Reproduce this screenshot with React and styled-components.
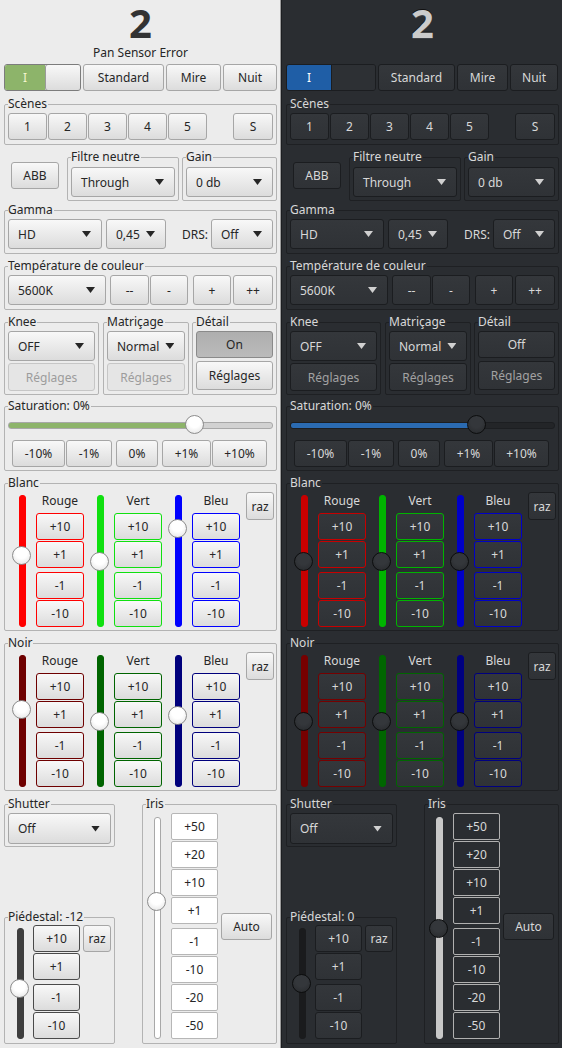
import React from 'react'
import styled, { createGlobalStyle, ThemeProvider } from 'styled-components'

const GlobalStyle = createGlobalStyle`
  html, body { margin: 0; padding: 0; background: #2a2d31; }
  body { font-family: "Noto Sans", "Open Sans", sans-serif; font-size: 12px; }
  * { box-sizing: border-box; }
`

const themes = {
  light: {
    bg: '#ececec',
    text: '#262626',
    title: '#333333',
    titleShadow: 'none',
    groupBorder: '#b3b3b3',
    btnBg: 'linear-gradient(#f8f8f8, #dcdcdc)',
    btnBorder: '#a6a6a6',
    disBg: '#e5e5e5',
    disBorder: '#c6c6c6',
    disText: '#9c9c9c',
    onBg: 'linear-gradient(#aeaeae, #bbbbbb)',
    onBorder: '#8a8a8a',
    accent: '#8db46a',
    accentText: '#f4f4cc',
    switchBorder: '#7c7c7c',
    switchOff: 'linear-gradient(#f8f8f8, #dcdcdc)',
    switchOffBorder: '#9a9a9a',
    switchOffRadius: '3px',
    arrow: '#262626',
    groove: '#d2d2d2',
    grooveBorder: '#a8a8a8',
    fill: '#8db46a',
    knob: 'radial-gradient(circle at 50% 35%, #ffffff 40%, #e0e0e0)',
    knobBorder: '#8c8c8c',
    irisBg: '#ffffff',
    irisBorder: '#b6b6b6',
    irisGroove: '#ffffff',
    irisGrooveBorder: '#a8a8a8',
    pedGroove: '#3e3e3e',
    pedBtn: '#4a4a4a',
    blanc: ['#ff0000', '#10e010', '#0000ff'],
    noir: ['#6e0000', '#006400', '#00007c'],
  },
  dark: {
    bg: '#2a2d31',
    text: '#d8d8d8',
    title: '#cbcbcb',
    titleShadow: '0 -1px 0 #111, 0 1px 0 #3c3f44',
    groupBorder: '#1e2023',
    btnBg: 'linear-gradient(#34373b, #2f3236)',
    btnBorder: '#1b1d20',
    disBg: 'linear-gradient(#34373b, #2f3236)',
    disBorder: '#1b1d20',
    disText: '#a2a2a2',
    onBg: '#3c4046',
    onBorder: '#1b1d20',
    accent: '#1f5ea6',
    accentText: '#ffffff',
    switchBorder: '#1b1d20',
    switchOff: '#2d3034',
    switchOffBorder: '#1b1d20',
    switchOffRadius: '0',
    arrow: '#d0d0d0',
    groove: '#232528',
    grooveBorder: '#1c1e21',
    fill: '#2b6bb2',
    knob: 'radial-gradient(circle at 50% 35%, #34373b 40%, #26282b)',
    knobBorder: '#0c0d0e',
    irisBg: '#2a2d31',
    irisBorder: '#b0b0b0',
    irisGroove: '#c8c8c8',
    irisGrooveBorder: '#c8c8c8',
    pedGroove: '#1a1b1d',
    pedBtn: '#1b1d20',
    blanc: ['#c80000', '#00b400', '#0000c8'],
    noir: ['#760000', '#006600', '#000080'],
  },
}

const panels = [
  {
    theme: themes.light,
    error: 'Pan Sensor Error',
    switchW: 77,
    switchOn: 40,
    modes: [81, 55, 54],
    detail: true,
    sat: 0.72,
    blanc: [0.45, 0.5, 0.21],
    noir: [0.4, 0.5, 0.45],
    iris: 0.37,
    ped: 0.55,
    pedValue: -12,
  },
  {
    theme: themes.dark,
    error: '',
    switchW: 90,
    switchOn: 44,
    modes: [77, 51, 48],
    detail: false,
    sat: 0.72,
    blanc: [0.5, 0.5, 0.5],
    noir: [0.5, 0.5, 0.5],
    iris: 0.5,
    ped: 0.5,
    pedValue: 0,
  },
]

const Page = styled.div`
  display: flex;
  width: 562px;
  height: 1048px;
  overflow: hidden;
`

const Panel = styled.div`
  width: 280px;
  height: 1048px;
  flex: none;
  padding: 0 3px 0 4px;
  display: flex;
  flex-direction: column;
  background: ${p => p.theme.bg};
  color: ${p => p.theme.text};
`

const Separator = styled.div`
  width: 2px;
  flex: none;
  background: linear-gradient(to right, #9c9c9c 50%, #1c1e21 50%);
`

const Title = styled.div`
  height: 46px;
  font-size: 40px;
  line-height: 46px;
  font-weight: 700;
  text-align: center;
  color: ${p => p.theme.title};
  text-shadow: ${p => p.theme.titleShadow};
`

const Subtitle = styled.div`
  height: 13px;
  line-height: 13px;
  text-align: center;
`

const Row = styled.div`
  display: flex;
  align-items: ${p => p.$align || 'stretch'};
  margin-top: ${p => p.$mt || 0}px;
  gap: ${p => p.$gap || 0}px;
`

const Btn = styled.button`
  flex: none;
  width: ${p => (p.$w ? `${p.$w}px` : '100%')};
  height: ${p => p.$h || 27}px;
  margin: ${p => (p.$gapTop ? 3 : 0)}px 0 0 ${p => (typeof p.$ml === 'number' ? `${p.$ml}px` : p.$ml || '0')};
  align-self: ${p => p.$self || 'auto'};
  padding: 0;
  font: inherit;
  font-size: 12px;
  color: ${p => (p.disabled ? p.theme.disText : p.theme.text)};
  background: ${p => (p.$on ? p.theme.onBg : p.disabled ? p.theme.disBg : p.theme.btnBg)};
  border: 1px solid ${p => p.$c || (p.$on ? p.theme.onBorder : p.disabled ? p.theme.disBorder : p.theme.btnBorder)};
  border-radius: 3px;
`

const IrisBtn = styled(Btn)`
  background: ${p => p.theme.irisBg};
  border-color: ${p => p.theme.irisBorder};
  border-radius: 2px;
`

const Combo = styled.div`
  flex: none;
  width: ${p => (p.$w ? `${p.$w}px` : '100%')};
  height: ${p => p.$h || 30}px;
  margin-left: ${p => p.$ml || 0}px;
  padding: 0 10px 0 9px;
  display: flex;
  align-items: center;
  justify-content: space-between;
  gap: 6px;
  background: ${p => p.theme.btnBg};
  border: 1px solid ${p => p.theme.btnBorder};
  border-radius: 3px;
`

const Arrow = styled.span`
  flex: none;
  width: 9px;
  height: 6px;
  background: ${p => p.theme.arrow};
  clip-path: polygon(0 0, 100% 0, 50% 100%);
`

const Switch = styled.div`
  flex: none;
  display: flex;
  width: ${p => p.$w}px;
  height: 27px;
  border: 1px solid ${p => p.theme.switchBorder};
  border-radius: 3px;
  overflow: hidden;
  background: ${p => p.theme.switchOff};
`

const SwitchOn = styled.span`
  width: ${p => p.$w}px;
  flex: none;
  display: flex;
  align-items: center;
  justify-content: center;
  background: ${p => p.theme.accent};
  color: ${p => p.theme.accentText};
`

const SwitchOff = styled.span`
  flex: 1;
  background: ${p => p.theme.switchOff};
  border: 1px solid ${p => p.theme.switchOffBorder};
  border-radius: ${p => p.theme.switchOffRadius};
  margin: -1px -1px -1px 0;
`

const Group = styled.fieldset`
  margin: 0 0 0 ${p => p.$ml || 0}px;
  min-width: 0;
  padding: ${p => (p.$pt === undefined ? 2 : p.$pt)}px 3px ${p => (p.$pb === undefined ? 4 : p.$pb)}px 3px;
  border: 1px solid ${p => p.theme.groupBorder};
  border-radius: 2px;
  width: ${p => (p.$w ? `${p.$w}px` : 'auto')};
  flex: ${p => (p.$w ? 'none' : '1')};
`

const Legend = styled.legend`
  padding: 0 1px 0 0;
  font-size: 12px;
  line-height: 14px;
  color: ${p => p.theme.text};
`

const GroupRow = styled.div`
  display: flex;
  align-items: ${p => p.$align || 'center'};
  gap: ${p => p.$gap || 0}px;
  margin-top: ${p => p.$mt || 0}px;
  padding-left: ${p => p.$pl || 0}px;
`

const GroupCol = styled.div`
  display: flex;
  flex-direction: column;
  gap: ${p => p.$gap || 0}px;
`

const FieldLabel = styled.span`
  margin-left: auto;
  margin-right: 3px;
`

const HTrack = styled.div`
  position: relative;
  height: 19px;
  &::before {
    content: '';
    position: absolute;
    left: 0;
    right: 0;
    top: 7px;
    height: 5px;
    border-radius: 3px;
    border: 1px solid ${p => p.theme.grooveBorder};
    background: linear-gradient(to right, ${p => p.theme.fill} ${p => p.$v * 100}%, ${p => p.theme.groove} ${p => p.$v * 100}%);
  }
`

const VTrack = styled.div`
  position: relative;
  flex: none;
  width: 19px;
  margin: ${p => p.$mt || 0}px 0 0 ${p => p.$ml || 0}px;
  &::before {
    content: '';
    position: absolute;
    top: 0;
    bottom: 0;
    left: 7px;
    width: 5px;
    border-radius: 3px;
    background: ${p => p.$c};
    border: 1px solid ${p => p.$border || p.$c};
  }
`

const Knob = styled.div`
  position: absolute;
  width: 19px;
  height: 19px;
  border-radius: 50%;
  background: ${p => p.theme.knob};
  border: 1px solid ${p => p.theme.knobBorder};
`

const Stack = styled.div`
  display: flex;
  flex-direction: column;
  gap: 1px;
  flex: none;
  width: ${p => p.$w}px;
  margin-left: ${p => p.$ml || 0}px;
`

const ChannelName = styled.div`
  margin: 2px 0 4px;
  height: 14px;
  line-height: 14px;
  text-align: center;
`

const Channel = styled.div`
  display: flex;
  flex: none;
`

const BottomRow = styled.div`
  display: flex;
  margin-top: 6px;
`

const LeftCol = styled.div`
  width: 111px;
  flex: none;
  display: flex;
  flex-direction: column;
  justify-content: space-between;
`

function VSlider({ knob, ...rest }) {
  return (
    <VTrack {...rest}>
      <Knob style={{ top: `calc((100% - 19px) * ${knob})` }} />
    </VTrack>
  )
}

function HSlider({ value }) {
  return (
    <HTrack $v={value}>
      <Knob style={{ left: `calc((100% - 19px) * ${value})`, top: 0 }} />
    </HTrack>
  )
}

const channels = ['Rouge', 'Vert', 'Bleu']
const steps = ['+10', '+1', '-1', '-10']
const irisSteps = ['+50', '+20', '+10', '+1', '-1', '-10', '-20', '-50']
const satSteps = [
  { label: '-10%', w: 53, ml: 4 },
  { label: '-1%', w: 46, ml: 1 },
  { label: '0%', w: 42, ml: 4 },
  { label: '+1%', w: 49, ml: 4 },
  { label: '+10%', w: 55, ml: 1 },
]

function ColorGroup({ title, colors, knobs, mt }) {
  return (
    <Row $mt={mt}>
      <Group $pb={3}>
        <Legend>{title}</Legend>
        <GroupRow $align="stretch" $gap={6} $pl={4}>
          {channels.map((name, i) => (
            <Channel key={name}>
              <VSlider $c={colors[i]} $mt={3} knob={knobs[i]} />
              <Stack $w={48} $ml={5}>
                <ChannelName>{name}</ChannelName>
                {steps.map((s, j) => (
                  <Btn key={s} $c={colors[i]} $gapTop={j === 2}>{s}</Btn>
                ))}
              </Stack>
            </Channel>
          ))}
          <Btn $w={28} $h={28} $self="flex-start" $ml="auto">raz</Btn>
        </GroupRow>
      </Group>
    </Row>
  )
}

function CameraPanel({ cfg }) {
  const t = cfg.theme
  return (
    <Panel>
      <Title>2</Title>
      <Subtitle>{cfg.error || '\u00a0'}</Subtitle>

      <Row $mt={5} $gap={2}>
        <Switch $w={cfg.switchW}>
          <SwitchOn $w={cfg.switchOn}>I</SwitchOn>
          <SwitchOff />
        </Switch>
        <Btn $w={cfg.modes[0]}>Standard</Btn>
        <Btn $w={cfg.modes[1]}>Mire</Btn>
        <Btn $w={cfg.modes[2]}>Nuit</Btn>
      </Row>

      <Row $mt={6}>
        <Group>
          <Legend>Scènes</Legend>
          <GroupRow $gap={1}>
            {['1', '2', '3', '4', '5'].map(n => <Btn key={n} $w={39}>{n}</Btn>)}
            <Btn $w={40} $ml="auto">S</Btn>
          </GroupRow>
        </Group>
      </Row>

      <Row $mt={5} $align="center">
        <Btn $w={48} $ml={7}>ABB</Btn>
        <Group $w={112} $ml={8} $pt={3} $pb={3}>
          <Legend>Filtre neutre</Legend>
          <Combo>Through<Arrow /></Combo>
        </Group>
        <Group $ml={3} $pt={3} $pb={3}>
          <Legend>Gain</Legend>
          <Combo>0 db<Arrow /></Combo>
        </Group>
      </Row>

      <Row $mt={2}>
        <Group>
          <Legend>Gamma</Legend>
          <GroupRow>
            <Combo $w={94}>HD<Arrow /></Combo>
            <Combo $w={60} $ml={4}>0,45<Arrow /></Combo>
            <FieldLabel>DRS:</FieldLabel>
            <Combo $w={62}>Off<Arrow /></Combo>
          </GroupRow>
        </Group>
      </Row>

      <Row $mt={5}>
        <Group>
          <Legend>Température de couleur</Legend>
          <GroupRow>
            <Combo $w={98}>5600K<Arrow /></Combo>
            <Btn $w={39} $h={30} $ml={4}>--</Btn>
            <Btn $w={38} $h={30} $ml={1}>-</Btn>
            <Btn $w={38} $h={30} $ml={5}>+</Btn>
            <Btn $w={40} $h={30} $ml={2}>++</Btn>
          </GroupRow>
        </Group>
      </Row>

      <Row $mt={5}>
        <Group $w={95} $pb={3}>
          <Legend>Knee</Legend>
          <GroupCol $gap={2}>
            <Combo>OFF<Arrow /></Combo>
            <Btn $h={28} disabled>Réglages</Btn>
          </GroupCol>
        </Group>
        <Group $w={86} $ml={4} $pb={3}>
          <Legend>Matriçage</Legend>
          <GroupCol $gap={2}>
            <Combo>Normal<Arrow /></Combo>
            <Btn $h={28} disabled>Réglages</Btn>
          </GroupCol>
        </Group>
        <Group $ml={3} $pb={3}>
          <Legend>Détail</Legend>
          <GroupCol $gap={3}>
            <Btn $on={cfg.detail}>{cfg.detail ? 'On' : 'Off'}</Btn>
            <Btn $h={29} disabled={!cfg.detail}>Réglages</Btn>
          </GroupCol>
        </Group>
      </Row>

      <Row $mt={4}>
        <Group $pb={3}>
          <Legend>Saturation: 0%</Legend>
          <HSlider value={cfg.sat} />
          <GroupRow $mt={6}>
            {satSteps.map(s => <Btn key={s.label} $w={s.w} $ml={s.ml}>{s.label}</Btn>)}
          </GroupRow>
        </Group>
      </Row>

      <ColorGroup title="Blanc" colors={t.blanc} knobs={cfg.blanc} mt={5} />
      <ColorGroup title="Noir" colors={t.noir} knobs={cfg.noir} mt={5} />

      <BottomRow>
        <LeftCol>
          <Group $w={111} $pb={2}>
            <Legend>Shutter</Legend>
            <Combo $h={31}>Off<Arrow /></Combo>
          </Group>
          <Group $w={111} $pt={1} $pb={4}>
            <Legend>Piédestal: {cfg.pedValue}</Legend>
            <GroupRow $align="stretch" $pl={2}>
              <VSlider $c={t.pedGroove} $mt={3} knob={cfg.ped} />
              <Stack $w={47} $ml={4}>
                {steps.map((s, j) => (
                  <Btn key={s} $c={t.pedBtn} $gapTop={j === 2}>{s}</Btn>
                ))}
              </Stack>
              <Btn $w={28} $ml={3} $self="flex-start">raz</Btn>
            </GroupRow>
          </Group>
        </LeftCol>
        <Group $ml={27} $pb={4}>
          <Legend>Iris</Legend>
          <GroupRow $align="stretch" $pl={1}>
            <VSlider $c={t.irisGroove} $border={t.irisGrooveBorder} $mt={4} knob={cfg.iris} />
            <Stack $w={47} $ml={5}>
              {irisSteps.map((s, j) => (
                <IrisBtn key={s} $gapTop={j === 4}>{s}</IrisBtn>
              ))}
            </Stack>
            <Btn $w={51} $ml={3} $self="center">Auto</Btn>
          </GroupRow>
        </Group>
      </BottomRow>
    </Panel>
  )
}

export default function App() {
  return (
    <Page>
      <GlobalStyle />
      <ThemeProvider theme={panels[0].theme}>
        <CameraPanel cfg={panels[0]} />
      </ThemeProvider>
      <Separator />
      <ThemeProvider theme={panels[1].theme}>
        <CameraPanel cfg={panels[1]} />
      </ThemeProvider>
    </Page>
  )
}
